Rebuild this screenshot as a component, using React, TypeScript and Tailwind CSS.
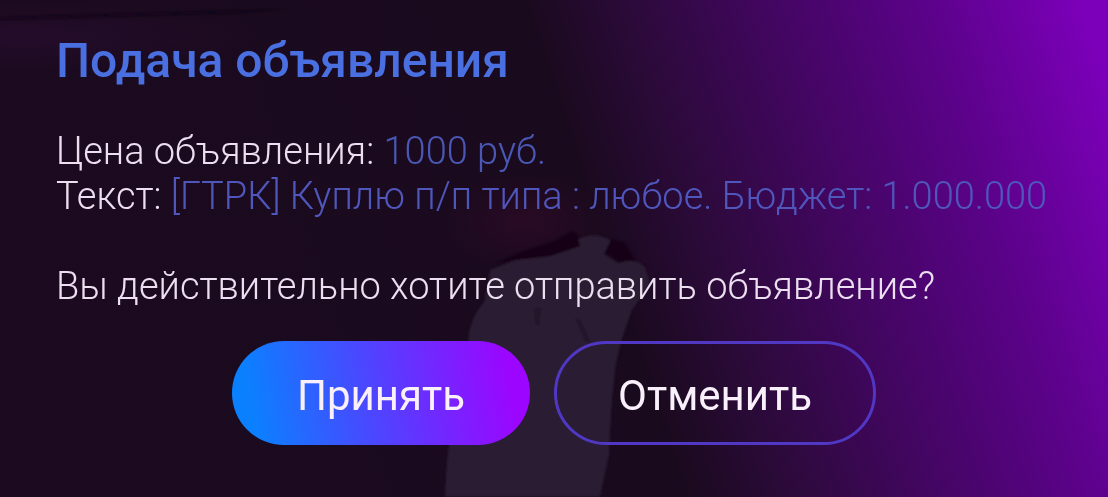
import React from "react";

function Silhouette() {
  return (
    <svg
      className="absolute inset-0 h-full w-full"
      viewBox="0 0 1108 497"
      preserveAspectRatio="xMidYMax slice"
      aria-hidden="true"
    >
      <defs>
        <radialGradient id="warm">
          <stop offset="0" stopColor="#330a28" stopOpacity="0.6" />
          <stop offset="1" stopColor="#330a28" stopOpacity="0" />
        </radialGradient>
        <radialGradient id="haze">
          <stop offset="0" stopColor="#2c0d36" stopOpacity="0.5" />
          <stop offset="1" stopColor="#2c0d36" stopOpacity="0" />
        </radialGradient>
        <filter id="soft" x="-5%" y="-5%" width="110%" height="110%">
          <feGaussianBlur stdDeviation="1" />
        </filter>
      </defs>
      <ellipse cx="20" cy="36" rx="240" ry="34" fill="url(#haze)" />
      <ellipse cx="525" cy="222" rx="85" ry="50" fill="url(#warm)" />
      <g filter="url(#soft)">
        <path d="M0 17 L290 9 L240 13 L0 20 Z" fill="#0c0414" opacity="0.6" />
        <path
          d="M495 264 L520 252 L555 241 L572 231 L579 236 L579 250 L550 257 L515 260 Z M608 238 L604 252 L620 262 L636 262 L625 243 Z"
          fill="#150619"
        />
        <path
          d="M445 497 C446 445 455 400 469 350 C466 334 472 315 484 302 L490 270 L515 260 L550 256 L580 246 L578 239 Q595 231 611 240 L604 254 L618 263 Q636 257 645 267 L650 284 L632 310 L622 339 L616 363 L612 400 L609 455 L600 497 Z"
          fill="#2a1c33"
        />
        <path
          d="M575 318 L581 321 L591 342 L585 341 Z M534 309 L541 307 L539 326 L535 323 Z"
          fill="#1c1027"
          opacity="0.7"
        />
      </g>
    </svg>
  );
}

export default function App() {
  return (
    <main className="relative min-h-screen overflow-hidden bg-[linear-gradient(72deg,#1c0b20_0%,#1a0a1e_54%,#2b0a39_62%,#420660_73%,#5a0288_85%,#7c00ba_98%)] font-[Roboto,sans-serif] text-[#ecdff0]">
      <Silhouette />
      <section
        role="dialog"
        aria-labelledby="dialog-title"
        className="relative px-14 pt-8 pb-12"
      >
        <h1 id="dialog-title" className="text-[48px] leading-[57px] font-medium text-[#4a6fe0]">
          Подача объявления
        </h1>
        <div className="mt-10 text-[38px] leading-[45px] font-light">
          <p>
            Цена объявления: <span className="text-[#4a57b4]">1000 руб.</span>
          </p>
          <p>
            Текст:{" "}
            <span className="text-[#4f57bc]">
              [ГТРК] Куплю п/п типа : любое. Бюджет: 1.000.000
            </span>
          </p>
          <p className="mt-[45px]">Вы действительно хотите отправить объявление?</p>
        </div>
        <div className="mt-8 flex justify-center gap-6 text-[42px] leading-[52px] text-[#faf0fc]">
          <button
            type="button"
            className="rounded-full bg-[linear-gradient(80deg,#0b80ff_8%,#4a48ff_45%,#9c05ff_92%)] px-[65px] pt-[29px] pb-[23px]"
          >
            Принять
          </button>
          <button
            type="button"
            className="rounded-full border-3 border-[#5038c4] px-[61px] pt-[26px] pb-[20px]"
          >
            Отменить
          </button>
        </div>
      </section>
    </main>
  );
}
